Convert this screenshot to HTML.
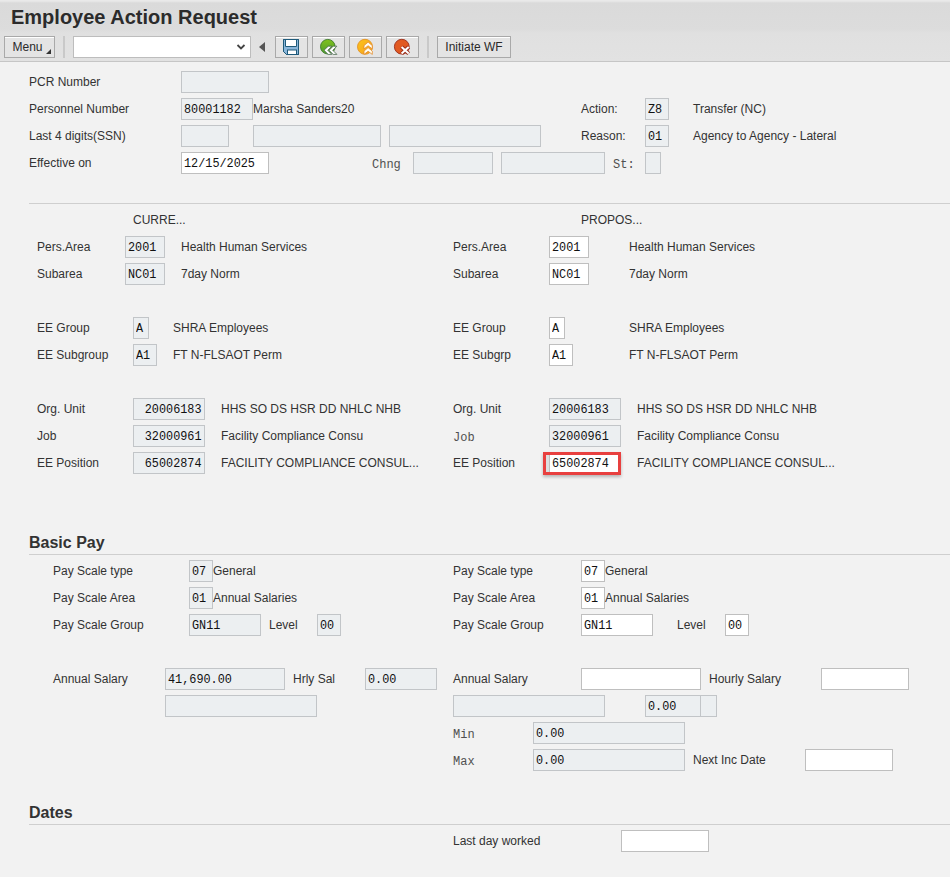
<!DOCTYPE html>
<html><head><meta charset="utf-8"><style>
*{box-sizing:border-box;margin:0;padding:0}
html,body{width:950px;height:877px;overflow:hidden;background:#f2f2f2;font-family:"Liberation Sans",sans-serif;font-size:12px;color:#333}
.hdr{position:absolute;left:0;top:0;width:950px;height:62px;background:linear-gradient(#e9e9e9 0,#e9e9e9 1px,#dadada 3px,#dcdcdc 29px,#e0e0e0 33px,#e2e2e2 61px);border-bottom:1px solid #c6c6c6}
.title{position:absolute;left:11px;top:5px;font-size:20px;font-weight:bold;color:#2b2b2b;line-height:24px}
.btn{position:absolute;top:36px;height:22px;border:1px solid #a9a9a9;background:#e4e4e4;box-shadow:inset 0 1px 0 #fff;font-size:12px;color:#2a2a2a;line-height:20px;text-align:center}
.ib{width:33px}
.ib svg{position:absolute;left:6px;top:0px}
.sep{position:absolute;top:36px;width:2px;height:22px;background:#c9c9c9}
.dd{position:absolute;left:73px;top:36px;width:178px;height:22px;background:#fff;border:1px solid #bdbdbd}
.l,.m{position:absolute;white-space:nowrap}
.m{font-family:"Liberation Mono",monospace;color:#505050;padding-top:2px}
.f{position:absolute;border:1px solid #c2c5c8;font-family:"Liberation Mono",monospace;font-size:12.2px;color:#111;padding:0 2px;white-space:nowrap;overflow:hidden}
.ro{background:#eceff1}
.v{display:inline-block;position:relative;top:1px;transform:scaleX(0.97);transform-origin:0 50%}
.v.r{transform-origin:100% 50%}
.ed{background:#fff;border-color:#bfbfbf}
.hr{position:absolute;height:1px;background:#cfcfcf}
.sec{position:absolute;font-size:16px;font-weight:bold;color:#333;line-height:20px}
.red{position:absolute;border:3px solid #e8403f;box-sizing:content-box;box-shadow:0 2px 3px rgba(0,0,0,0.25)}
</style></head><body>
<div class="hdr"></div>
<div class="title">Employee Action Request</div>
<div class="btn" style="left:4px;width:51px;text-align:left;padding-left:7.5px">Menu<span style="position:absolute;right:3px;bottom:3px;width:0;height:0;border-left:5px solid transparent;border-bottom:5px solid #333"></span></div>
<div class="sep" style="left:63px"></div>
<div class="dd"><svg style="position:absolute;right:4px;top:6px" width="10" height="8" viewBox="0 0 10 8"><path d="M1.5 2l3.5 3.5 3.5-3.5" fill="none" stroke="#444" stroke-width="1.8"/></svg></div>
<div style="position:absolute;left:259px;top:42px;width:0;height:0;border-top:5px solid transparent;border-bottom:5px solid transparent;border-right:6px solid #555"></div>

<div class="btn ib" style="left:275px"></div>
<div class="btn ib" style="left:312px"></div>
<div class="btn ib" style="left:349px"></div>
<div class="btn ib" style="left:386px"></div>
<svg style="position:absolute;left:283px;top:39px" width="16" height="16" viewBox="0 0 16 16"><path d="M0.5 0.5H15.5V15.5H3.5L0.5 12.5Z" fill="#8ab6da" stroke="#1f5a7a"/><path d="M2.5 0.5V7.5H13.5V0.5" fill="#fff" stroke="#1f5a7a"/><rect x="4.5" y="11" width="9" height="4.5" fill="#fff" stroke="#1f5a7a"/><path d="M0.5 0.5H15.5V15.5H3.5L0.5 12.5Z" fill="none" stroke="#1f5a7a"/></svg>
<svg style="position:absolute;left:319px;top:38px" width="22" height="18" viewBox="0 0 22 18"><defs><linearGradient id="g1" x1="0" y1="0" x2="0" y2="1"><stop offset="0" stop-color="#80c21c"/><stop offset="1" stop-color="#4d9a2e"/></linearGradient></defs><circle cx="8.8" cy="8.7" r="7.3" fill="url(#g1)" stroke="#3d7a2a" stroke-width="0.9"/><path d="M5.0 12.3L9.2 8.2H12.9L8.8 12.3L12.9 16.4H9.2ZM10.0 12.3L14.2 8.2H17.9L13.8 12.3L17.9 16.4H14.2Z" fill="#fff" stroke="#46664a" stroke-width="0.8" stroke-linejoin="round"/></svg>
<svg style="position:absolute;left:356px;top:38px" width="20" height="18" viewBox="0 0 20 18"><defs><linearGradient id="g2" x1="0" y1="0" x2="1" y2="1"><stop offset="0" stop-color="#fcc41a"/><stop offset="1" stop-color="#f5a020"/></linearGradient></defs><circle cx="9" cy="8.8" r="7.5" fill="url(#g2)" stroke="#e39225" stroke-width="0.9"/><path d="M12.1 4.1L16.3 7.6V10.9L12.1 7.8L8 10.9V7.6ZM12.1 9.6L16.3 13.1V16.4L12.1 13.3L8 16.4V13.1Z" fill="#fffdf0" stroke="#e48a2a" stroke-width="0.8" stroke-linejoin="round"/></svg>
<svg style="position:absolute;left:393px;top:38px" width="20" height="18" viewBox="0 0 20 18"><circle cx="8.8" cy="8.7" r="7.4" fill="#e15a22" stroke="#9a2e1c" stroke-width="0.9"/><path d="M8.6 9L15.7 15.6M15.7 9L8.6 15.6" fill="none" stroke="#9a2e1c" stroke-width="4"/><path d="M8.6 9L15.7 15.6M15.7 9L8.6 15.6" fill="none" stroke="#fff" stroke-width="2"/></svg>

<div class="sep" style="left:427px"></div>
<div class="btn" style="left:437px;width:74px">Initiate WF</div>
<div class="l" style="left:29px;top:71px;height:22px;line-height:22px">PCR Number</div>
<div class="f ro" style="left:181px;top:71px;width:88px;height:22px;line-height:20px;text-align:left"></div>
<div class="l" style="left:29px;top:98px;height:22px;line-height:22px">Personnel Number</div>
<div class="f ro" style="left:181px;top:98px;width:72px;height:22px;line-height:20px;text-align:left"><span class="v">80001182</span></div>
<div class="l" style="left:253px;top:98px;height:22px;line-height:22px">Marsha Sanders20</div>
<div class="l" style="left:29px;top:125px;height:22px;line-height:22px">Last 4 digits(SSN)</div>
<div class="f ro" style="left:181px;top:125px;width:48px;height:22px;line-height:20px;text-align:left"></div>
<div class="f ro" style="left:253px;top:125px;width:128px;height:22px;line-height:20px;text-align:left"></div>
<div class="f ro" style="left:389px;top:125px;width:152px;height:22px;line-height:20px;text-align:left"></div>
<div class="l" style="left:29px;top:152px;height:22px;line-height:22px">Effective on</div>
<div class="f ed" style="left:181px;top:152px;width:88px;height:22px;line-height:20px;text-align:left"><span class="v">12/15/2025</span></div>
<div class="m" style="left:372px;top:152px;height:22px;line-height:22px">Chng</div>
<div class="f ro" style="left:413px;top:152px;width:80px;height:22px;line-height:20px;text-align:left"></div>
<div class="f ro" style="left:501px;top:152px;width:104px;height:22px;line-height:20px;text-align:left"></div>
<div class="m" style="left:613px;top:152px;height:22px;line-height:22px">St:</div>
<div class="f ro" style="left:645px;top:152px;width:16px;height:22px;line-height:20px;text-align:left"></div>
<div class="l" style="left:581px;top:98px;height:22px;line-height:22px">Action:</div>
<div class="f ro" style="left:645px;top:98px;width:24px;height:22px;line-height:20px;text-align:left"><span class="v">Z8</span></div>
<div class="l" style="left:693px;top:98px;height:22px;line-height:22px">Transfer (NC)</div>
<div class="l" style="left:581px;top:125px;height:22px;line-height:22px">Reason:</div>
<div class="f ro" style="left:645px;top:125px;width:24px;height:22px;line-height:20px;text-align:left"><span class="v">01</span></div>
<div class="l" style="left:693px;top:125px;height:22px;line-height:22px">Agency to Agency - Lateral</div>
<div class="hr" style="left:29px;top:203px;width:921px"></div>
<div class="l" style="left:133px;top:209px;height:22px;line-height:22px">CURRE...</div>
<div class="l" style="left:581px;top:209px;height:22px;line-height:22px">PROPOS...</div>
<div class="l" style="left:37px;top:236px;height:22px;line-height:22px">Pers.Area</div>
<div class="f ro" style="left:125px;top:236px;width:40px;height:22px;line-height:20px;text-align:left"><span class="v">2001</span></div>
<div class="l" style="left:181px;top:236px;height:22px;line-height:22px">Health Human Services</div>
<div class="l" style="left:37px;top:263px;height:22px;line-height:22px">Subarea</div>
<div class="f ro" style="left:125px;top:263px;width:40px;height:22px;line-height:20px;text-align:left"><span class="v">NC01</span></div>
<div class="l" style="left:181px;top:263px;height:22px;line-height:22px">7day Norm</div>
<div class="l" style="left:37px;top:317px;height:22px;line-height:22px">EE Group</div>
<div class="f ro" style="left:133px;top:317px;width:16px;height:22px;line-height:20px;text-align:left"><span class="v">A</span></div>
<div class="l" style="left:173px;top:317px;height:22px;line-height:22px">SHRA Employees</div>
<div class="l" style="left:37px;top:344px;height:22px;line-height:22px">EE Subgroup</div>
<div class="f ro" style="left:133px;top:344px;width:24px;height:22px;line-height:20px;text-align:left"><span class="v">A1</span></div>
<div class="l" style="left:173px;top:344px;height:22px;line-height:22px">FT N-FLSAOT Perm</div>
<div class="l" style="left:37px;top:398px;height:22px;line-height:22px">Org. Unit</div>
<div class="f ro" style="left:133px;top:398px;width:72px;height:22px;line-height:20px;text-align:right"><span class="v r">20006183</span></div>
<div class="l" style="left:221px;top:398px;height:22px;line-height:22px">HHS SO DS HSR DD NHLC NHB</div>
<div class="l" style="left:37px;top:425px;height:22px;line-height:22px">Job</div>
<div class="f ro" style="left:133px;top:425px;width:72px;height:22px;line-height:20px;text-align:right"><span class="v r">32000961</span></div>
<div class="l" style="left:221px;top:425px;height:22px;line-height:22px">Facility Compliance Consu</div>
<div class="l" style="left:37px;top:452px;height:22px;line-height:22px">EE Position</div>
<div class="f ro" style="left:133px;top:452px;width:72px;height:22px;line-height:20px;text-align:right"><span class="v r">65002874</span></div>
<div class="l" style="left:221px;top:452px;height:22px;line-height:22px">FACILITY COMPLIANCE CONSUL...</div>
<div class="l" style="left:453px;top:236px;height:22px;line-height:22px">Pers.Area</div>
<div class="f ed" style="left:549px;top:236px;width:40px;height:22px;line-height:20px;text-align:left"><span class="v">2001</span></div>
<div class="l" style="left:629px;top:236px;height:22px;line-height:22px">Health Human Services</div>
<div class="l" style="left:453px;top:263px;height:22px;line-height:22px">Subarea</div>
<div class="f ed" style="left:549px;top:263px;width:40px;height:22px;line-height:20px;text-align:left"><span class="v">NC01</span></div>
<div class="l" style="left:629px;top:263px;height:22px;line-height:22px">7day Norm</div>
<div class="l" style="left:453px;top:317px;height:22px;line-height:22px">EE Group</div>
<div class="f ed" style="left:549px;top:317px;width:16px;height:22px;line-height:20px;text-align:left"><span class="v">A</span></div>
<div class="l" style="left:629px;top:317px;height:22px;line-height:22px">SHRA Employees</div>
<div class="l" style="left:453px;top:344px;height:22px;line-height:22px">EE Subgrp</div>
<div class="f ed" style="left:549px;top:344px;width:24px;height:22px;line-height:20px;text-align:left"><span class="v">A1</span></div>
<div class="l" style="left:629px;top:344px;height:22px;line-height:22px">FT N-FLSAOT Perm</div>
<div class="l" style="left:453px;top:398px;height:22px;line-height:22px">Org. Unit</div>
<div class="f ro" style="left:549px;top:398px;width:72px;height:22px;line-height:20px;text-align:left"><span class="v">20006183</span></div>
<div class="l" style="left:637px;top:398px;height:22px;line-height:22px">HHS SO DS HSR DD NHLC NHB</div>
<div class="m" style="left:453px;top:425px;height:22px;line-height:22px">Job</div>
<div class="f ro" style="left:549px;top:425px;width:72px;height:22px;line-height:20px;text-align:left"><span class="v">32000961</span></div>
<div class="l" style="left:637px;top:425px;height:22px;line-height:22px">Facility Compliance Consu</div>
<div class="l" style="left:453px;top:452px;height:22px;line-height:22px">EE Position</div>
<div class="f ed" style="left:549px;top:452px;width:72px;height:22px;line-height:20px;text-align:left"><span class="v">65002874</span></div>
<div class="l" style="left:637px;top:452px;height:22px;line-height:22px">FACILITY COMPLIANCE CONSUL...</div>
<div style="position:absolute;left:546px;top:455px;width:3px;height:17px;background:#dcdfe0"></div>
<div class="red" style="left:543px;top:452px;width:72px;height:17px"></div>
<div class="sec" style="left:29px;top:533px">Basic Pay</div>
<div class="hr" style="left:29px;top:554px;width:921px"></div>
<div class="l" style="left:53px;top:560px;height:22px;line-height:22px">Pay Scale type</div>
<div class="f ro" style="left:189px;top:560px;width:24px;height:22px;line-height:20px;text-align:left"><span class="v">07</span></div>
<div class="l" style="left:213px;top:560px;height:22px;line-height:22px">General</div>
<div class="l" style="left:53px;top:587px;height:22px;line-height:22px">Pay Scale Area</div>
<div class="f ro" style="left:189px;top:587px;width:24px;height:22px;line-height:20px;text-align:left"><span class="v">01</span></div>
<div class="l" style="left:213px;top:587px;height:22px;line-height:22px">Annual Salaries</div>
<div class="l" style="left:53px;top:614px;height:22px;line-height:22px">Pay Scale Group</div>
<div class="f ro" style="left:189px;top:614px;width:72px;height:22px;line-height:20px;text-align:left"><span class="v">GN11</span></div>
<div class="l" style="left:269px;top:614px;height:22px;line-height:22px">Level</div>
<div class="f ro" style="left:317px;top:614px;width:24px;height:22px;line-height:20px;text-align:left"><span class="v">00</span></div>
<div class="l" style="left:53px;top:668px;height:22px;line-height:22px">Annual Salary</div>
<div class="f ro" style="left:165px;top:668px;width:120px;height:22px;line-height:20px;text-align:left"><span class="v">41,690.00</span></div>
<div class="l" style="left:293px;top:668px;height:22px;line-height:22px">Hrly Sal</div>
<div class="f ro" style="left:365px;top:668px;width:72px;height:22px;line-height:20px;text-align:left"><span class="v">0.00</span></div>
<div class="f ro" style="left:165px;top:695px;width:152px;height:22px;line-height:20px;text-align:left"></div>
<div class="l" style="left:453px;top:560px;height:22px;line-height:22px">Pay Scale type</div>
<div class="f ed" style="left:581px;top:560px;width:24px;height:22px;line-height:20px;text-align:left"><span class="v">07</span></div>
<div class="l" style="left:605px;top:560px;height:22px;line-height:22px">General</div>
<div class="l" style="left:453px;top:587px;height:22px;line-height:22px">Pay Scale Area</div>
<div class="f ed" style="left:581px;top:587px;width:24px;height:22px;line-height:20px;text-align:left"><span class="v">01</span></div>
<div class="l" style="left:605px;top:587px;height:22px;line-height:22px">Annual Salaries</div>
<div class="l" style="left:453px;top:614px;height:22px;line-height:22px">Pay Scale Group</div>
<div class="f ed" style="left:581px;top:614px;width:72px;height:22px;line-height:20px;text-align:left"><span class="v">GN11</span></div>
<div class="l" style="left:677px;top:614px;height:22px;line-height:22px">Level</div>
<div class="f ed" style="left:725px;top:614px;width:24px;height:22px;line-height:20px;text-align:left"><span class="v">00</span></div>
<div class="l" style="left:453px;top:668px;height:22px;line-height:22px">Annual Salary</div>
<div class="f ed" style="left:581px;top:668px;width:120px;height:22px;line-height:20px;text-align:left"></div>
<div class="l" style="left:709px;top:668px;height:22px;line-height:22px">Hourly Salary</div>
<div class="f ed" style="left:821px;top:668px;width:88px;height:22px;line-height:20px;text-align:left"></div>
<div class="f ro" style="left:453px;top:695px;width:152px;height:22px;line-height:20px;text-align:left"></div>
<div class="f ro" style="left:645px;top:695px;width:56px;height:22px;line-height:20px;text-align:left"><span class="v">0.00</span></div>
<div class="f ro" style="left:700px;top:695px;width:17px;height:22px;line-height:20px;text-align:left"></div>
<div class="m" style="left:453px;top:722px;height:22px;line-height:22px">Min</div>
<div class="f ro" style="left:533px;top:722px;width:152px;height:22px;line-height:20px;text-align:left"><span class="v">0.00</span></div>
<div class="m" style="left:453px;top:749px;height:22px;line-height:22px">Max</div>
<div class="f ro" style="left:533px;top:749px;width:152px;height:22px;line-height:20px;text-align:left"><span class="v">0.00</span></div>
<div class="l" style="left:693px;top:749px;height:22px;line-height:22px">Next Inc Date</div>
<div class="f ed" style="left:805px;top:749px;width:88px;height:22px;line-height:20px;text-align:left"></div>
<div class="sec" style="left:29px;top:803px">Dates</div>
<div class="hr" style="left:29px;top:824px;width:921px"></div>
<div class="l" style="left:453px;top:830px;height:22px;line-height:22px">Last day worked</div>
<div class="f ed" style="left:621px;top:830px;width:88px;height:22px;line-height:20px;text-align:left"></div>
</body></html>
